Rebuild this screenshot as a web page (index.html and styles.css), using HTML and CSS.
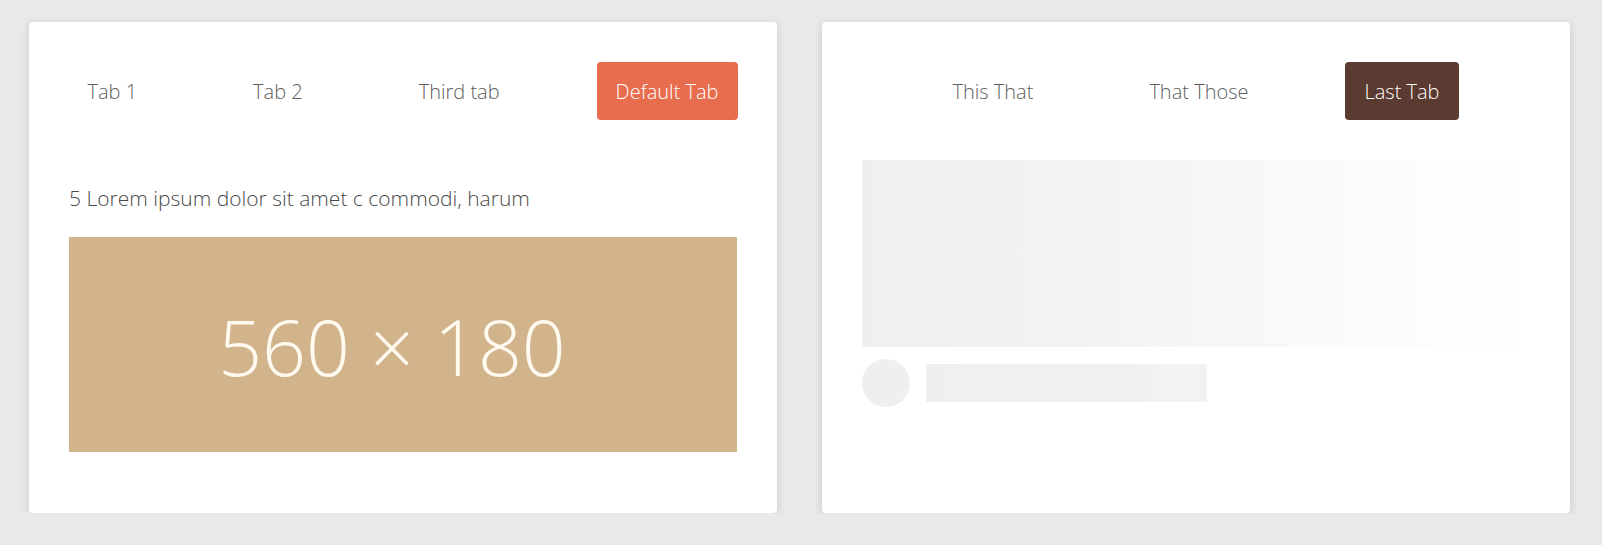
FILE: index.html
```html
<!DOCTYPE html>
<html lang="en">
<head>
<meta charset="utf-8">
<title>Tabs</title>
<link rel="stylesheet" href="styles.css">
</head>
<body>
<div class="page">
  <section class="card">
    <nav class="tabs">
      <div class="tab">Tab 1</div>
      <div class="tab">Tab 2</div>
      <div class="tab">Third tab</div>
      <div class="tab active-orange">Default Tab</div>
    </nav>
    <div class="panel">
      <p class="lead">5 Lorem ipsum dolor sit amet c commodi, harum</p>
      <div class="placeholder"><span class="ph-text">560 × 180</span></div>
    </div>
  </section>
  <section class="card">
    <nav class="tabs">
      <div class="tab">This That</div>
      <div class="tab">That Those</div>
      <div class="tab active-brown">Last Tab</div>
    </nav>
    <div class="panel">
      <div class="sk-media"></div>
      <div class="sk-row">
        <div class="sk-avatar"></div>
        <div class="sk-line"></div>
      </div>
    </div>
  </section>
</div>
</body>
</html>
```

FILE: styles.css
```css
html, body {
  margin: 0;
  padding: 0;
  background: #e9e9e9;
  font-family: "Open Sans", "Noto Sans", sans-serif;
}

.page {
  display: flex;
  gap: 45px;
  padding: 22px 32px 0 29px;
}

.card {
  box-sizing: border-box;
  width: 748px;
  height: 491px;
  padding: 40px;
  background: #fff;
  border-radius: 4px;
  box-shadow: 0 2px 8px rgba(0, 0, 0, 0.14);
}

.tabs {
  display: flex;
  justify-content: center;
  gap: 78px;
}

.tab {
  height: 58px;
  padding: 0 19px;
  display: flex;
  align-items: center;
  font-size: 20px;
  font-weight: 300;
  color: #5e5e5e;
  border-radius: 4px;
  white-space: nowrap;
}

.active-orange {
  background: #e76d4e;
  color: #fff;
}

.active-brown {
  background: #5b3a31;
  color: #fff;
}

.panel {
  padding-top: 40px;
}

.lead {
  margin: 22px 0 23px;
  font-size: 21px;
  line-height: 32px;
  font-weight: 300;
  color: #4a4a4a;
}

.placeholder {
  height: 215px;
  background: #d2b48c;
  display: flex;
  align-items: center;
  justify-content: center;
  font-size: 77px;
  font-weight: 300;
  color: #fffaf0;
}

.ph-text {
  margin-right: 22px;
  margin-top: 4px;
}

.sk-media {
  height: 187px;
  background: linear-gradient(to right, #efefef 0%, #f2f2f2 30%, #f8f8f8 60%, #fdfdfd 85%, #ffffff 100%);
}

.sk-row {
  display: flex;
  align-items: center;
  gap: 16px;
  margin-top: 12px;
}

.sk-avatar {
  width: 48px;
  height: 48px;
  border-radius: 50%;
  background: #efefef;
}

.sk-line {
  width: 281px;
  height: 38px;
  background: linear-gradient(to right, #efefef, #f2f2f2);
}
```
